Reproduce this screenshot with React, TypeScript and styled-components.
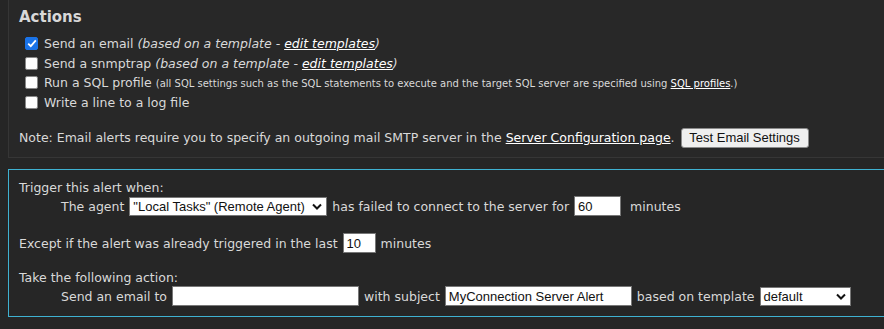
import styled, { createGlobalStyle } from "styled-components"

const Global = createGlobalStyle`
    body {
        margin: 0;
        background: #262626;
        color: #d9d9d9;
        font-family: "DejaVu Sans", Tahoma, sans-serif;
        font-size: 12.5px;
    }
`

const Page = styled.div`
    padding-left: 8px;
    width: 900px;
    overflow: hidden;
`

const ActionsPanel = styled.div`
    border-left: 1px solid #363636;
    border-bottom: 1px solid #363636;
    background: #282828;
    padding: 8px 0 4px 10px;
    height: 158px;
    box-sizing: border-box;
`

const Heading = styled.div`
    font-weight: bold;
    font-size: 15px;
    color: #d8d8d8;
    margin-bottom: 11px;
`

const CheckList = styled.div`
    display: flex;
    flex-direction: column;
    gap: 6.5px;
    padding-left: 6px;
`

const CheckRow = styled.label`
    display: flex;
    align-items: center;
    gap: 6px;
    height: 13px;
    white-space: nowrap;
`

const Box = styled.span<{ $on?: boolean }>`
    width: 13px;
    height: 13px;
    border-radius: 2px;
    box-sizing: border-box;
    background: ${(p) => (p.$on ? "#1a73e8" : "#fff")};
    border: 1px solid ${(p) => (p.$on ? "#1a73e8" : "#888")};
    display: flex;
    align-items: center;
    justify-content: center;
    flex-shrink: 0;
`

const Hint = styled.span`
    font-style: italic;
`

const Small = styled.span`
    font-size: 10px;
`

const Link = styled.a`
    color: #fff;
    text-decoration: underline;
`

const NoteRow = styled.div`
    display: flex;
    align-items: center;
    gap: 6px;
    margin-top: 19px;
    white-space: nowrap;
`

const Button = styled.button`
    font-family: "Liberation Sans", Arial, sans-serif;
    font-size: 13px;
    color: #111;
    background: #efefef;
    border: 1px solid #8a8a8a;
    border-radius: 3px;
    height: 20px;
    width: 128px;
    padding: 0;
`

const TriggerPanel = styled.div`
    margin-top: 11px;
    border: 1px solid #3fb2d2;
    border-right: none;
    padding: 10px 0 0 10px;
    height: 148px;
    box-sizing: border-box;
`

const Line = styled.div<{ $indent?: boolean; $gap?: number }>`
    display: flex;
    align-items: center;
    gap: 5px;
    height: 20px;
    padding-left: ${(p) => (p.$indent ? "42px" : "0")};
    margin-top: ${(p) => p.$gap ?? 0}px;
    white-space: nowrap;
`

const Label = styled.div<{ $gap?: number }>`
    line-height: 16px;
    margin-top: ${(p) => p.$gap ?? 0}px;
`

const Field = styled.input<{ $w: number }>`
    width: ${(p) => p.$w}px;
    height: 20px;
    box-sizing: border-box;
    border: 1px solid #777;
    background: #fff;
    color: #111;
    font-family: "Liberation Sans", Arial, sans-serif;
    font-size: 13px;
    padding: 0 3px;
`

const Select = styled.div<{ $w: number }>`
    width: ${(p) => p.$w}px;
    height: 19px;
    box-sizing: border-box;
    border: 1px solid #777;
    background: #fff;
    color: #111;
    font-family: "Liberation Sans", Arial, sans-serif;
    font-size: 13px;
    padding: 0 4px 0 3px;
    display: flex;
    align-items: center;
    justify-content: space-between;
`

const Chevron = () => (
    <svg width="10" height="7" viewBox="0 0 10 7">
        <path d="M1 1.5 L5 5.5 L9 1.5" stroke="#111" strokeWidth="2" fill="none" />
    </svg>
)

const Check = () => (
    <svg width="10" height="9" viewBox="0 0 10 9">
        <path d="M1.2 4.6 L3.8 7.2 L8.8 1.4" stroke="#fff" strokeWidth="1.8" fill="none" />
    </svg>
)

export default function App() {
    return (
        <Page>
            <Global />
            <ActionsPanel>
                <Heading>Actions</Heading>
                <CheckList>
                    <CheckRow>
                        <Box $on>
                            <Check />
                        </Box>
                        <span>
                            Send an email{" "}
                            <Hint>
                                (based on a template - <Link>edit templates</Link>)
                            </Hint>
                        </span>
                    </CheckRow>
                    <CheckRow>
                        <Box />
                        <span>
                            Send a snmptrap{" "}
                            <Hint>
                                (based on a template - <Link>edit templates</Link>)
                            </Hint>
                        </span>
                    </CheckRow>
                    <CheckRow>
                        <Box />
                        <span>
                            Run a SQL profile{" "}
                            <Small>
                                (all SQL settings such as the SQL statements to execute and the target SQL server are
                                specified using <Link>SQL profiles</Link>.)
                            </Small>
                        </span>
                    </CheckRow>
                    <CheckRow>
                        <Box />
                        <span>Write a line to a log file</span>
                    </CheckRow>
                </CheckList>
                <NoteRow>
                    <span>
                        Note: Email alerts require you to specify an outgoing mail SMTP server in the{" "}
                        <Link>Server Configuration page</Link>.
                    </span>
                    <Button>Test Email Settings</Button>
                </NoteRow>
            </ActionsPanel>
            <TriggerPanel>
                <Label>Trigger this alert when:</Label>
                <Line $indent>
                    <span>The agent</span>
                    <Select $w={198}>
                        <span>"Local Tasks" (Remote Agent)</span>
                        <Chevron />
                    </Select>
                    <span>has failed to connect to the server for</span>
                    <Field $w={47} defaultValue="60" />
                    <span>&nbsp;minutes</span>
                </Line>
                <Line $gap={17}>
                    <span>Except if the alert was already triggered in the last</span>
                    <Field $w={33} defaultValue="10" />
                    <span>minutes</span>
                </Line>
                <Label $gap={17}>Take the following action:</Label>
                <Line $indent>
                    <span>Send an email to</span>
                    <Field $w={187} defaultValue="" />
                    <span>with subject</span>
                    <Field $w={187} defaultValue="MyConnection Server Alert" />
                    <span>based on template</span>
                    <Select $w={91}>
                        <span>default</span>
                        <Chevron />
                    </Select>
                </Line>
            </TriggerPanel>
        </Page>
    )
}
